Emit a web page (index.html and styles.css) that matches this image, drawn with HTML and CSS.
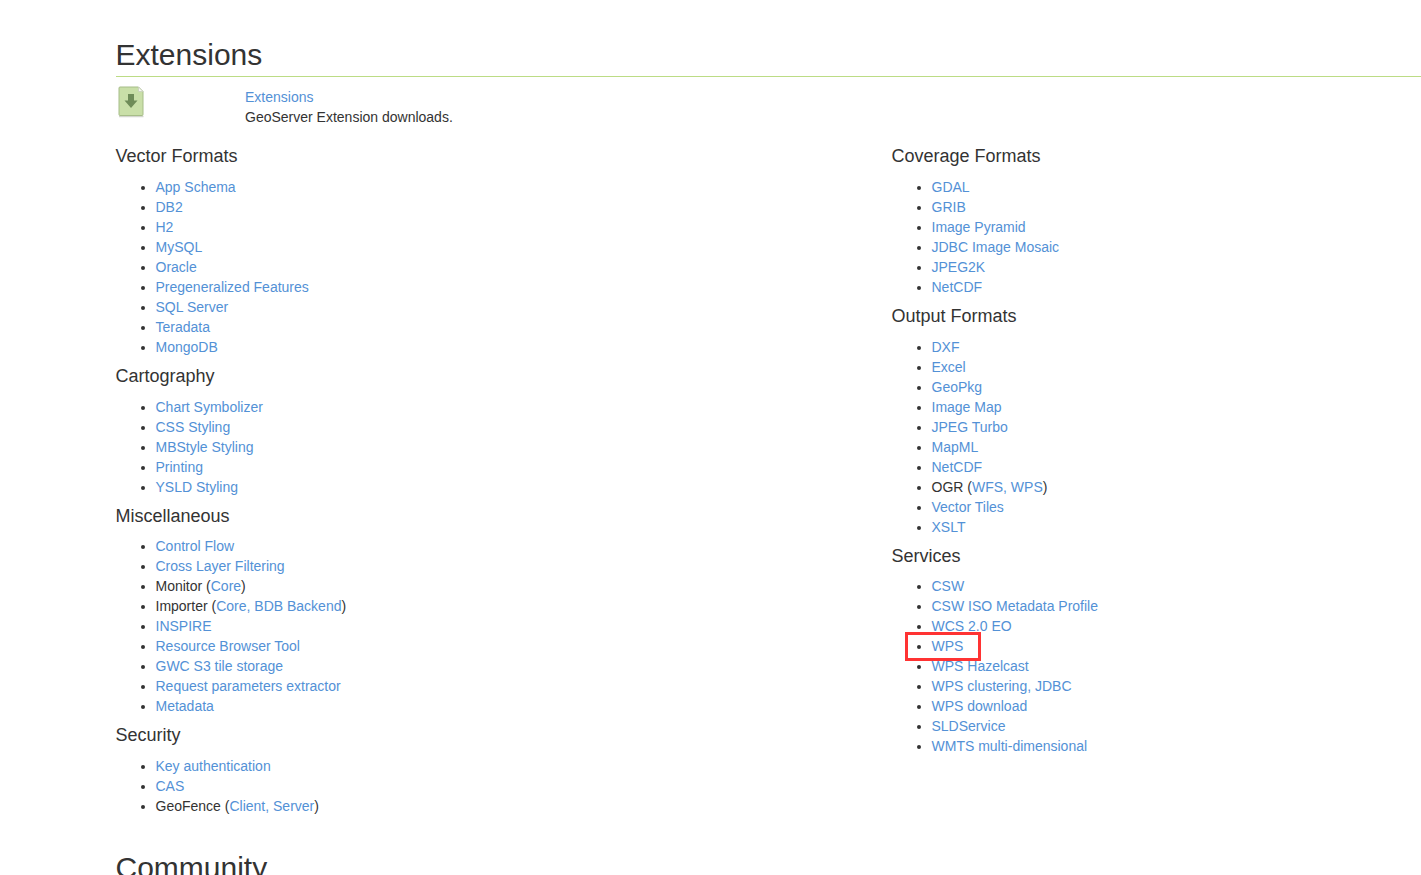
FILE: index.html
```html
<!DOCTYPE html>
<html lang="en">
<head>
<meta charset="utf-8">
<title>Extensions</title>
<link rel="stylesheet" href="styles.css">
</head>
<body>
<main class="page">
  <h1 class="title">Extensions</h1>
  <div class="intro">
    <div class="intro-icon">
      <svg class="download-icon" width="26" height="32" viewBox="0 0 26 32" aria-hidden="true">
        <path d="M1 30.500h24.500" stroke="#d3d6cd" stroke-width="1.500" fill="none"/>
        <path d="M2 1H20.500L25 5.500V28.500a1 1 0 0 1-1 1H2a1 1 0 0 1-1-1V2a1 1 0 0 1 1-1Z" fill="#c9dfa8" stroke="#a6bd88"/>
        <path d="M20.500 1V5.500H25Z" fill="#f5f7f0" stroke="#c4ccb8" stroke-width=".7"/>
        <path d="M10 8h6v6.500h3.500L13 22 6.500 14.500H10Z" fill="#6f8c58"/>
      </svg>
    </div>
    <div class="intro-text">
      <a href="#">Extensions</a><br>
      GeoServer Extension downloads.
    </div>
  </div>
  <div class="columns">
    <section class="col">
      <h3>Vector Formats</h3>
      <ul>
        <li><a href="#">App Schema</a></li>
        <li><a href="#">DB2</a></li>
        <li><a href="#">H2</a></li>
        <li><a href="#">MySQL</a></li>
        <li><a href="#">Oracle</a></li>
        <li><a href="#">Pregeneralized Features</a></li>
        <li><a href="#">SQL Server</a></li>
        <li><a href="#">Teradata</a></li>
        <li><a href="#">MongoDB</a></li>
      </ul>
      <h3>Cartography</h3>
      <ul>
        <li><a href="#">Chart Symbolizer</a></li>
        <li><a href="#">CSS Styling</a></li>
        <li><a href="#">MBStyle Styling</a></li>
        <li><a href="#">Printing</a></li>
        <li><a href="#">YSLD Styling</a></li>
      </ul>
      <h3>Miscellaneous</h3>
      <ul>
        <li><a href="#">Control Flow</a></li>
        <li><a href="#">Cross Layer Filtering</a></li>
        <li>Monitor (<a href="#">Core</a>)</li>
        <li>Importer (<a href="#">Core, BDB Backend</a>)</li>
        <li><a href="#">INSPIRE</a></li>
        <li><a href="#">Resource Browser Tool</a></li>
        <li><a href="#">GWC S3 tile storage</a></li>
        <li><a href="#">Request parameters extractor</a></li>
        <li><a href="#">Metadata</a></li>
      </ul>
      <h3>Security</h3>
      <ul>
        <li><a href="#">Key authentication</a></li>
        <li><a href="#">CAS</a></li>
        <li>GeoFence (<a href="#">Client, Server</a>)</li>
      </ul>
    </section>
    <section class="col">
      <h3>Coverage Formats</h3>
      <ul>
        <li><a href="#">GDAL</a></li>
        <li><a href="#">GRIB</a></li>
        <li><a href="#">Image Pyramid</a></li>
        <li><a href="#">JDBC Image Mosaic</a></li>
        <li><a href="#">JPEG2K</a></li>
        <li><a href="#">NetCDF</a></li>
      </ul>
      <h3>Output Formats</h3>
      <ul>
        <li><a href="#">DXF</a></li>
        <li><a href="#">Excel</a></li>
        <li><a href="#">GeoPkg</a></li>
        <li><a href="#">Image Map</a></li>
        <li><a href="#">JPEG Turbo</a></li>
        <li><a href="#">MapML</a></li>
        <li><a href="#">NetCDF</a></li>
        <li>OGR (<a href="#">WFS, WPS</a>)</li>
        <li><a href="#">Vector Tiles</a></li>
        <li><a href="#">XSLT</a></li>
      </ul>
      <h3>Services</h3>
      <ul>
        <li><a href="#">CSW</a></li>
        <li><a href="#">CSW ISO Metadata Profile</a></li>
        <li><a href="#">WCS 2.0 EO</a></li>
        <li class="marked"><a href="#">WPS</a><span class="highlight"></span></li>
        <li><a href="#">WPS Hazelcast</a></li>
        <li><a href="#">WPS clustering, JDBC</a></li>
        <li><a href="#">WPS download</a></li>
        <li><a href="#">SLDService</a></li>
        <li><a href="#">WMTS multi-dimensional</a></li>
      </ul>
    </section>
  </div>
  <h1 class="title community">Community</h1>
</main>
</body>
</html>
```
FILE: styles.css
```css
html, body {
  margin: 0;
  height: 100%;
  overflow: hidden;
  background: #fff;
}
body {
  font-family: "Liberation Sans", Arial, sans-serif;
  font-size: 14px;
  line-height: 20px;
  color: #333;
}
a {
  color: #5391d6;
  text-decoration: none;
}
.page {
  padding: 38px 0 0 115.500px;
}
.title {
  margin: 0;
  font-size: 30px;
  font-weight: 400;
  line-height: 33px;
  padding-bottom: 5px;
  border-bottom: 1px solid #bcdc85;
}
.community {
  margin-top: 25px;
  border-bottom: 0;
}
.intro {
  display: flex;
  margin-top: 10px;
}
.intro-icon {
  width: 129.500px;
  height: 40px;
  flex: none;
}
.download-icon {
  display: block;
  margin: -1px 0 0 2.500px;
}
.columns {
  display: flex;
  margin-top: 10px;
}
.col {
  width: 776px;
  flex: none;
}
h3 {
  margin: 10px 0;
  font-size: 18px;
  font-weight: 400;
  line-height: 19.800px;
}
ul {
  margin: 0 0 10px;
  padding-left: 40px;
}
.marked {
  position: relative;
}
.highlight {
  position: absolute;
  left: -27px;
  top: -4px;
  width: 70px;
  height: 23px;
  border: 3px solid #f33;
}
```
